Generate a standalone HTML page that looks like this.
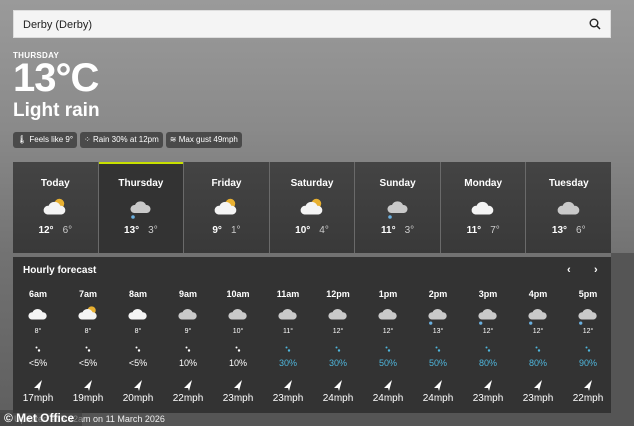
<!DOCTYPE html>
<html><head><meta charset="utf-8"><style>
*{margin:0;padding:0;box-sizing:border-box}
body{width:634px;height:426px;overflow:hidden;font-family:"Liberation Sans","DejaVu Sans",sans-serif;color:#fff;position:relative;
background:linear-gradient(180deg,#9a9a9a 0%,#8a8a8a 30%,#727272 60%,#5e5e5e 100%)}
.search{position:absolute;left:13px;top:10px;width:598px;height:28px;background:#f4f4f4;border:1px solid #ddd;color:#222;font-size:11px;padding:8px 0 0 9px}
.search svg{position:absolute;right:9px;top:7px}
.thu{position:absolute;left:13px;top:51px;font-size:8px;font-weight:bold;letter-spacing:.3px}
.big{position:absolute;left:13px;top:56px;font-size:40px;font-weight:bold;letter-spacing:-1px}
.cond{position:absolute;left:13px;top:100px;font-size:19px;font-weight:bold}
.pills{position:absolute;left:13px;top:132px;display:flex;gap:3px}
.pill{background:#4a4a4a;border-radius:3px;font-size:8px;padding:3px 4px;height:16px;white-space:nowrap}
.days{position:absolute;left:13px;top:162px;width:598px;height:91px;display:flex;gap:1px;background:#6a6a6a}
.day{flex:1;background:linear-gradient(#444,#393939);text-align:center;position:relative}
.day.sel{background:#333;border-top:2px solid #c8e000}
.day .n{font-size:10px;font-weight:bold;margin-top:16px}
.day svg{display:block;margin:8px auto 0}
.day .t{font-size:10px;margin-top:6px}
.day .t b{margin-right:9px}
.day .t span{color:#ccc}
.hourly{position:absolute;left:13px;top:257px;width:598px;height:156px;background:#333}
.hourly h3{position:absolute;left:10px;top:8px;font-size:10px}
.nav{position:absolute;top:7px;font-size:11px;font-weight:bold}
.cols{position:absolute;left:0;top:32px;display:flex;padding-left:0}
.c{width:50px;text-align:center;font-size:9px;position:relative;height:120px}
.c .tm{position:absolute;top:0;width:100%;font-weight:bold}
.c .ic{position:absolute;top:16px;left:14px}
.c .tp{position:absolute;top:39px;width:100%;font-size:7px}
.c .rd{position:absolute;top:57px;left:22px}
.c .pc{position:absolute;top:69px;width:100%}
.c .ar{position:absolute;top:90px;left:20px}
.c .sp{position:absolute;top:104px;width:100%;font-size:10px}
.blue{color:#4fb6dc}
.foot{position:absolute;left:0;top:413px;width:634px;height:13px;background:#555}
.upd{position:absolute;left:14px;top:414px;font-size:9px;color:#eee}
.mo{position:absolute;left:0;top:410px;height:16px;width:82px;background:rgba(60,60,60,.6);font-size:12px;font-weight:bold;padding-left:4px;line-height:16px}
.side{position:absolute;left:611px;top:253px;width:23px;height:173px;background:#555}
</style></head><body>
<svg width="0" height="0" style="position:absolute">
<defs>
<g id="cw"><path d="M5 16 a4 4 0 0 1 1-8 a6 6 0 0 1 11 0 a4 4 0 0 1 1 8z" fill="#f4f4f4"/></g>
<g id="cg"><path d="M5 16 a4 4 0 0 1 1-8 a6 6 0 0 1 11 0 a4 4 0 0 1 1 8z" fill="#c9c9c9"/></g>
<g id="sun"><circle cx="16" cy="6" r="4.5" fill="#e8b030"/></g>
<g id="drop"><circle cx="4" cy="20" r="1.8" fill="#6ab0e0"/></g>
</defs></svg>
<div class="search">Derby (Derby)<svg width="12" height="12" viewBox="0 0 12 12"><circle cx="5" cy="5" r="3.8" fill="none" stroke="#222" stroke-width="1.4"/><path d="M8 8l3 3" stroke="#222" stroke-width="1.5"/></svg></div>
<div class="thu">THURSDAY</div>
<div class="big">13°C</div>
<div class="cond">Light rain</div>
<div class="pills"><div class="pill">🌡 Feels like 9°</div><div class="pill">⁘ Rain 30% at 12pm</div><div class="pill">≋ Max gust 49mph</div></div>
<div class="days">
<div class="day"><div class="n">Today</div><svg width="26" height="22" viewBox="0 0 24 20"><use href="#sun"/><use href="#cw"/></svg><div class="t"><b>12°</b><span>6°</span></div></div>
<div class="day sel"><div class="n" style="margin-top:14px">Thursday</div><svg width="26" height="22" viewBox="0 0 24 22"><use href="#cg"/><use href="#drop"/></svg><div class="t"><b>13°</b><span>3°</span></div></div>
<div class="day"><div class="n">Friday</div><svg width="26" height="22" viewBox="0 0 24 20"><use href="#sun"/><use href="#cw"/></svg><div class="t"><b>9°</b><span>1°</span></div></div>
<div class="day"><div class="n">Saturday</div><svg width="26" height="22" viewBox="0 0 24 20"><use href="#sun"/><use href="#cw"/></svg><div class="t"><b>10°</b><span>4°</span></div></div>
<div class="day"><div class="n">Sunday</div><svg width="26" height="22" viewBox="0 0 24 22"><use href="#cg"/><use href="#drop"/></svg><div class="t"><b>11°</b><span>3°</span></div></div>
<div class="day"><div class="n">Monday</div><svg width="26" height="22" viewBox="0 0 24 20"><use href="#cw"/></svg><div class="t"><b>11°</b><span>7°</span></div></div>
<div class="day"><div class="n">Tuesday</div><svg width="26" height="22" viewBox="0 0 24 20"><use href="#cg"/></svg><div class="t"><b>13°</b><span>6°</span></div></div>
</div>
<div class="hourly"><h3>Hourly forecast</h3><div class="nav" style="left:554px">‹</div><div class="nav" style="left:581px">›</div>
<div class="cols">
<div class="c"><div class="tm">6am</div><svg class="ic" width="22" height="20" viewBox="0 0 24 22"><use href="#cw"/></svg><div class="tp">8°</div><svg class="rd" width="6" height="6"><circle cx="1.5" cy="1.5" r="1" fill="#fff"/><circle cx="4" cy="4.5" r="1.2" fill="#fff"/></svg><div class="pc">&lt;5%</div><svg class="ar" width="10" height="12"><path d="M9 1L1 9l4 0 1 3z" fill="#fff"/></svg><div class="sp">17mph</div></div>
<div class="c"><div class="tm">7am</div><svg class="ic" width="22" height="20" viewBox="0 0 24 22"><use href="#sun"/><use href="#cw"/></svg><div class="tp">8°</div><svg class="rd" width="6" height="6"><circle cx="1.5" cy="1.5" r="1" fill="#fff"/><circle cx="4" cy="4.5" r="1.2" fill="#fff"/></svg><div class="pc">&lt;5%</div><svg class="ar" width="10" height="12"><path d="M9 1L1 9l4 0 1 3z" fill="#fff"/></svg><div class="sp">19mph</div></div>
<div class="c"><div class="tm">8am</div><svg class="ic" width="22" height="20" viewBox="0 0 24 22"><use href="#cw"/></svg><div class="tp">8°</div><svg class="rd" width="6" height="6"><circle cx="1.5" cy="1.5" r="1" fill="#fff"/><circle cx="4" cy="4.5" r="1.2" fill="#fff"/></svg><div class="pc">&lt;5%</div><svg class="ar" width="10" height="12"><path d="M9 1L1 9l4 0 1 3z" fill="#fff"/></svg><div class="sp">20mph</div></div>
<div class="c"><div class="tm">9am</div><svg class="ic" width="22" height="20" viewBox="0 0 24 22"><use href="#cg"/></svg><div class="tp">9°</div><svg class="rd" width="6" height="6"><circle cx="1.5" cy="1.5" r="1" fill="#fff"/><circle cx="4" cy="4.5" r="1.2" fill="#fff"/></svg><div class="pc">10%</div><svg class="ar" width="10" height="12"><path d="M9 1L1 9l4 0 1 3z" fill="#fff"/></svg><div class="sp">22mph</div></div>
<div class="c"><div class="tm">10am</div><svg class="ic" width="22" height="20" viewBox="0 0 24 22"><use href="#cg"/></svg><div class="tp">10°</div><svg class="rd" width="6" height="6"><circle cx="1.5" cy="1.5" r="1" fill="#fff"/><circle cx="4" cy="4.5" r="1.2" fill="#fff"/></svg><div class="pc">10%</div><svg class="ar" width="10" height="12"><path d="M9 1L1 9l4 0 1 3z" fill="#fff"/></svg><div class="sp">23mph</div></div>
<div class="c"><div class="tm">11am</div><svg class="ic" width="22" height="20" viewBox="0 0 24 22"><use href="#cg"/></svg><div class="tp">11°</div><svg class="rd" width="6" height="6"><circle cx="1.5" cy="1.5" r="1" fill="#4fb6dc"/><circle cx="4" cy="4.5" r="1.2" fill="#4fb6dc"/></svg><div class="pc blue">30%</div><svg class="ar" width="10" height="12"><path d="M9 1L1 9l4 0 1 3z" fill="#fff"/></svg><div class="sp">23mph</div></div>
<div class="c"><div class="tm">12pm</div><svg class="ic" width="22" height="20" viewBox="0 0 24 22"><use href="#cg"/></svg><div class="tp">12°</div><svg class="rd" width="6" height="6"><circle cx="1.5" cy="1.5" r="1" fill="#4fb6dc"/><circle cx="4" cy="4.5" r="1.2" fill="#4fb6dc"/></svg><div class="pc blue">30%</div><svg class="ar" width="10" height="12"><path d="M9 1L1 9l4 0 1 3z" fill="#fff"/></svg><div class="sp">24mph</div></div>
<div class="c"><div class="tm">1pm</div><svg class="ic" width="22" height="20" viewBox="0 0 24 22"><use href="#cg"/></svg><div class="tp">12°</div><svg class="rd" width="6" height="6"><circle cx="1.5" cy="1.5" r="1" fill="#4fb6dc"/><circle cx="4" cy="4.5" r="1.2" fill="#4fb6dc"/></svg><div class="pc blue">50%</div><svg class="ar" width="10" height="12"><path d="M9 1L1 9l4 0 1 3z" fill="#fff"/></svg><div class="sp">24mph</div></div>
<div class="c"><div class="tm">2pm</div><svg class="ic" width="22" height="20" viewBox="0 0 24 22"><use href="#cg"/><use href="#drop"/></svg><div class="tp">13°</div><svg class="rd" width="6" height="6"><circle cx="1.5" cy="1.5" r="1" fill="#4fb6dc"/><circle cx="4" cy="4.5" r="1.2" fill="#4fb6dc"/></svg><div class="pc blue">50%</div><svg class="ar" width="10" height="12"><path d="M9 1L1 9l4 0 1 3z" fill="#fff"/></svg><div class="sp">24mph</div></div>
<div class="c"><div class="tm">3pm</div><svg class="ic" width="22" height="20" viewBox="0 0 24 22"><use href="#cg"/><use href="#drop"/></svg><div class="tp">12°</div><svg class="rd" width="6" height="6"><circle cx="1.5" cy="1.5" r="1" fill="#4fb6dc"/><circle cx="4" cy="4.5" r="1.2" fill="#4fb6dc"/></svg><div class="pc blue">80%</div><svg class="ar" width="10" height="12"><path d="M9 1L1 9l4 0 1 3z" fill="#fff"/></svg><div class="sp">23mph</div></div>
<div class="c"><div class="tm">4pm</div><svg class="ic" width="22" height="20" viewBox="0 0 24 22"><use href="#cg"/><use href="#drop"/></svg><div class="tp">12°</div><svg class="rd" width="6" height="6"><circle cx="1.5" cy="1.5" r="1" fill="#4fb6dc"/><circle cx="4" cy="4.5" r="1.2" fill="#4fb6dc"/></svg><div class="pc blue">80%</div><svg class="ar" width="10" height="12"><path d="M9 1L1 9l4 0 1 3z" fill="#fff"/></svg><div class="sp">23mph</div></div>
<div class="c"><div class="tm">5pm</div><svg class="ic" width="22" height="20" viewBox="0 0 24 22"><use href="#cg"/><use href="#drop"/></svg><div class="tp">12°</div><svg class="rd" width="6" height="6"><circle cx="1.5" cy="1.5" r="1" fill="#4fb6dc"/><circle cx="4" cy="4.5" r="1.2" fill="#4fb6dc"/></svg><div class="pc blue">90%</div><svg class="ar" width="10" height="12"><path d="M9 1L1 9l4 0 1 3z" fill="#fff"/></svg><div class="sp">22mph</div></div>
</div></div>
<div class="side"></div>
<div class="foot"></div>
<div class="upd">Updated at 5:42am on 11 March 2026</div>
<div class="mo">© Met Office</div>
</body></html>
